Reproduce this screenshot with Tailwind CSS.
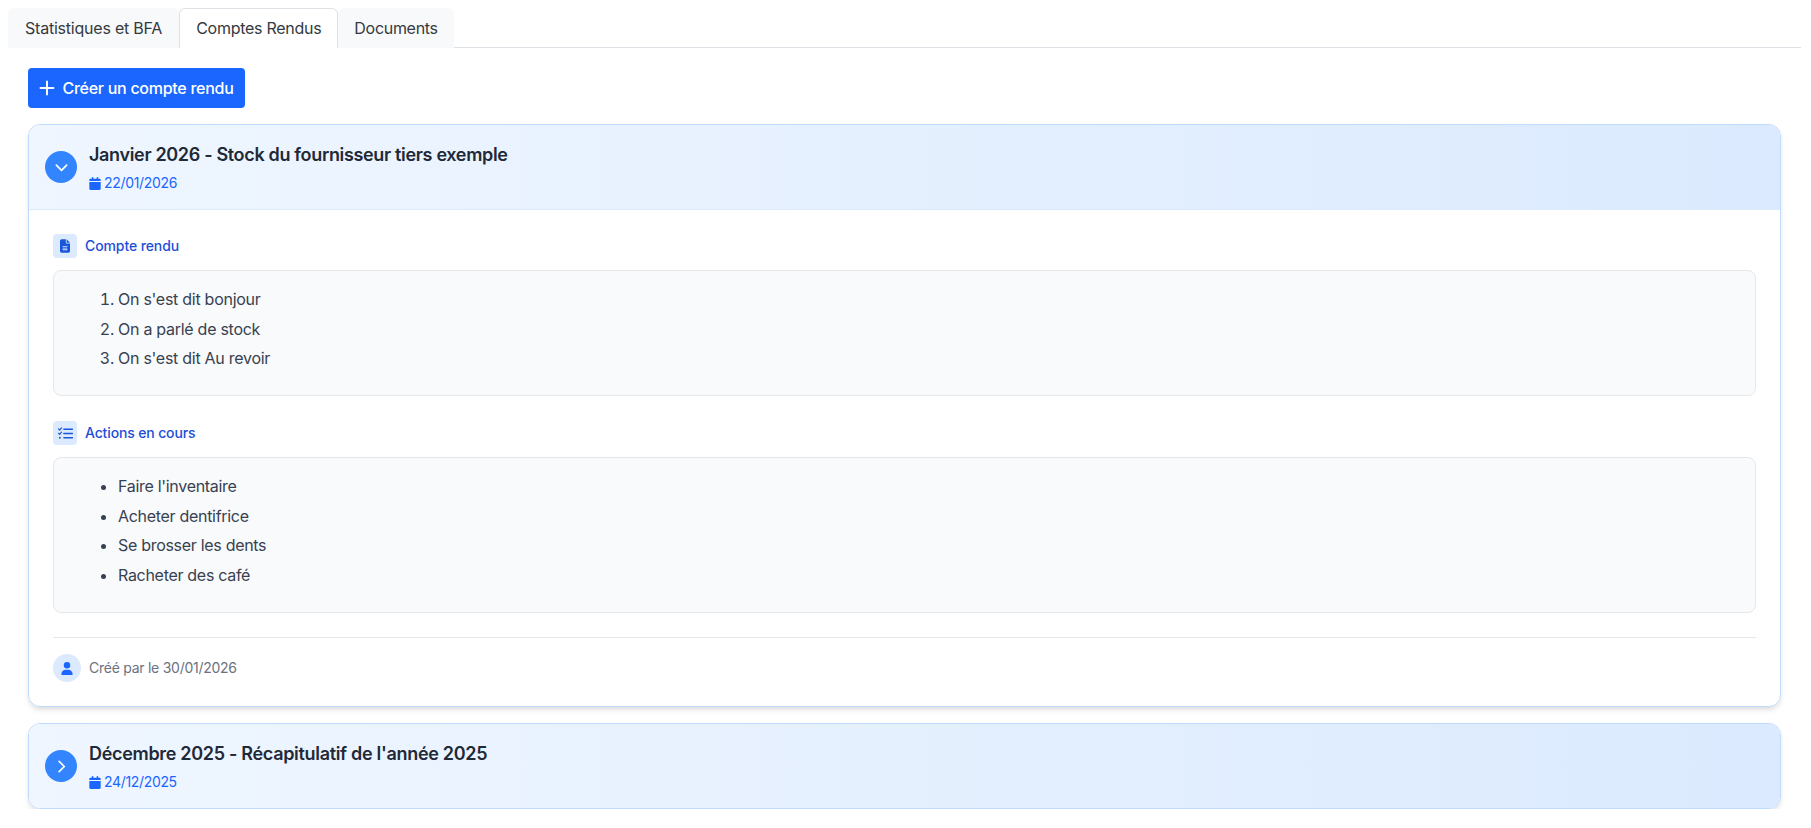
<!DOCTYPE html>
<html lang="fr"><head><meta charset="utf-8"><title>Comptes Rendus</title>
<script src="https://cdn.jsdelivr.net/npm/@tailwindcss/browser@4"></script></head>
<body class="bg-white font-['Inter',sans-serif] text-[#212529] overflow-hidden">
<div class="pl-2 pr-[10px] pt-2">
  <div class="flex border-b border-[#dee2e6] h-[40px]">
    <button class="h-[40px] px-[17px] bg-[#f8f9fa] rounded-t-md text-base leading-6 tracking-[-0.22px] text-[#343a40]">Statistiques et BFA</button>
    <button class="h-[40px] px-4 bg-white border border-[#dee2e6] border-b-white rounded-t-md text-base leading-6 tracking-[-0.27px] text-[#343a40]">Comptes Rendus</button>
    <button class="h-[40px] px-4 bg-[#f8f9fa] rounded-t-md text-base leading-6 tracking-[-0.3px] text-[#343a40]">Documents</button>
  </div>
  <div class="px-5 pt-5">
    <button class="h-[40px] w-[217px] flex items-center justify-center gap-[7px] bg-[#1a66ff] text-white rounded font-medium text-base tracking-[-0.27px]">
      <svg width="16" height="16" viewBox="0 0 16 16" fill="none" stroke="currentColor" stroke-width="1.9" stroke-linecap="round"><path d="M8 1.500v13M1.500 8h13"/></svg>
      Créer un compte rendu</button>

    <div class="mt-4 border border-[#bfdbfe] rounded-xl shadow-md overflow-hidden">
      <div class="h-[85px] flex items-center gap-3 px-4 bg-gradient-to-r from-[#eff6ff] to-[#dbeafe] border-b border-[#dbeafe]">
        <span class="w-8 h-8 rounded-full bg-[#3385ff] flex items-center justify-center text-white">
          <svg width="15" height="15" viewBox="0 0 16 16" fill="none" stroke="currentColor" stroke-width="1.8" stroke-linecap="round" stroke-linejoin="round"><path d="M2.500 5.500 8 11l5.500-5.500"/></svg>
        </span>
        <div>
          <div class="text-lg leading-7 font-semibold tracking-[-0.33px] text-[#1f2937]">Janvier 2026 - Stock du fournisseur tiers exemple</div>
          <div class="mt-1 flex items-center gap-[3px] text-sm leading-5 tracking-[-0.33px] text-[#1a66ff]">
            <svg width="12" height="13" viewBox="0 0 448 512" fill="currentColor"><path d="M128 0c18 0 32 14 32 32v32h128V32c0-18 14-32 32-32s32 14 32 32v32h48c27 0 48 21 48 48v48H0v-48c0-27 21-48 48-48h48V32c0-18 14-32 32-32zM0 192h448v272c0 27-21 48-48 48H48c-27 0-48-21-48-48V192z"/></svg>
            22/01/2026</div>
        </div>
      </div>
      <div class="px-6 pt-6 pb-6">
        <div class="flex items-center gap-2 h-6">
          <span class="w-6 h-6 rounded bg-[#dbeafe] flex items-center justify-center text-[#1a56db]">
            <svg width="10" height="14" viewBox="0 0 384 512" fill="currentColor"><path d="M64 0C29 0 0 29 0 64v384c0 35 29 64 64 64h256c35 0 64-29 64-64V160H256c-18 0-32-14-32-32V0H64zm192 0v128h128L256 0zM112 256h160c9 0 16 7 16 16s-7 16-16 16H112c-9 0-16-7-16-16s7-16 16-16zm0 64h160c9 0 16 7 16 16s-7 16-16 16H112c-9 0-16-7-16-16s7-16 16-16zm0 64h160c9 0 16 7 16 16s-7 16-16 16H112c-9 0-16-7-16-16s7-16 16-16z"/></svg>
          </span>
          <span class="text-sm font-medium tracking-[-0.1px] text-[#1d4ed8]">Compte rendu</span>
        </div>
        <div class="mt-3 h-[126px] bg-[#f9fafb] border border-[#e5e7eb] rounded-lg pt-[14px] pl-[48px] text-base tracking-[-0.27px] text-[#374151]">
          <ol class="list-decimal pl-4 leading-[29.6px]">
            <li>On s'est dit bonjour</li><li>On a parlé de stock</li><li>On s'est dit Au revoir</li>
          </ol>
        </div>
        <div class="mt-[25px] flex items-center gap-2 h-6">
          <span class="w-6 h-6 rounded bg-[#dbeafe] flex items-center justify-center text-[#1a56db]">
            <svg width="15" height="13" viewBox="0 0 14 12" fill="none" stroke="currentColor" stroke-linecap="round" stroke-linejoin="round"><path d="M5.500 2h8M5.500 6h8M5.500 10h8" stroke-width="1.4"/><path d="M.6 1.800 1.600 2.800 3.300.8M.6 5.800 1.600 6.800 3.300 4.800" stroke-width="1.100"/><circle cx="1.700" cy="10" r=".9" fill="currentColor" stroke="none"/></svg>
          </span>
          <span class="text-sm font-medium tracking-[-0.14px] text-[#1d4ed8]">Actions en cours</span>
        </div>
        <div class="mt-3 h-[156px] bg-[#f9fafb] border border-[#e5e7eb] rounded-lg pt-[14px] pl-[48px] text-base tracking-[-0.3px] text-[#374151]">
          <ul class="list-disc pl-4 leading-[29.6px]">
            <li>Faire l'inventaire</li><li>Acheter dentifrice</li><li>Se brosser les dents</li><li>Racheter des café</li>
          </ul>
        </div>
        <div class="mt-6 border-t border-[#e5e7eb] pt-4 flex items-center gap-2">
          <span class="w-7 h-7 rounded-full bg-[#dbeafe] flex items-center justify-center text-[#1a66ff]">
            <svg width="12" height="13" viewBox="0 0 448 512" fill="currentColor"><path d="M224 256a128 128 0 1 0 0-256 128 128 0 0 0 0 256zm-46 48C79.600 304 0 383.600 0 482c0 16.400 13.300 30 29.700 30h388.600c16.400 0 29.700-13.600 29.700-30 0-98.400-79.600-178-178-178h-92z"/></svg>
          </span>
          <span class="text-sm tracking-[-0.26px] text-[#6b7280]">Créé par le 30/01/2026</span>
        </div>
      </div>
    </div>

    <div class="mt-4 border border-[#bfdbfe] rounded-xl shadow-md overflow-hidden">
      <div class="h-[84px] flex items-center gap-3 px-4 bg-gradient-to-r from-[#eff6ff] to-[#dbeafe]">
        <span class="w-8 h-8 rounded-full bg-[#3385ff] flex items-center justify-center text-white">
          <svg width="15" height="15" viewBox="0 0 16 16" fill="none" stroke="currentColor" stroke-width="1.8" stroke-linecap="round" stroke-linejoin="round"><path d="M5.500 2.500 11 8l-5.500 5.500"/></svg>
        </span>
        <div>
          <div class="text-lg leading-7 font-semibold tracking-[-0.31px] text-[#1f2937]">Décembre 2025 - Récapitulatif de l'année 2025</div>
          <div class="mt-1 flex items-center gap-[3px] text-sm leading-5 tracking-[-0.33px] text-[#1a66ff]">
            <svg width="12" height="13" viewBox="0 0 448 512" fill="currentColor"><path d="M128 0c18 0 32 14 32 32v32h128V32c0-18 14-32 32-32s32 14 32 32v32h48c27 0 48 21 48 48v48H0v-48c0-27 21-48 48-48h48V32c0-18 14-32 32-32zM0 192h448v272c0 27-21 48-48 48H48c-27 0-48-21-48-48V192z"/></svg>
            24/12/2025</div>
        </div>
      </div>
    </div>
  </div>
</div>
</body></html>
